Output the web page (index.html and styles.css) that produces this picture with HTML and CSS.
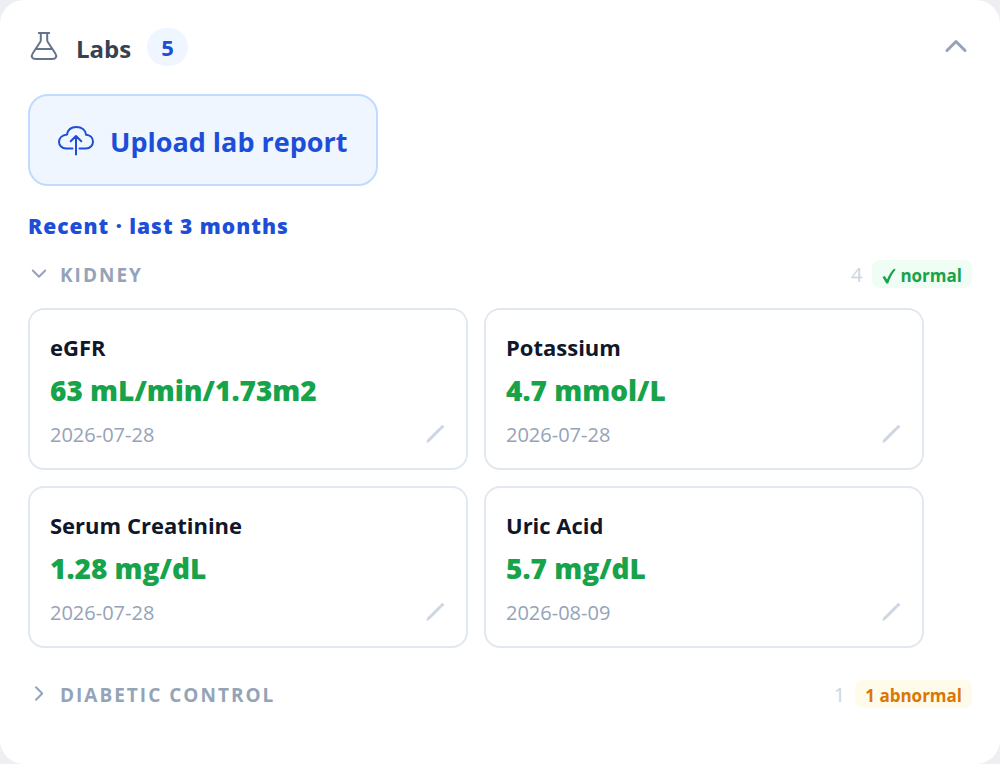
FILE: index.html
```html
<!DOCTYPE html>
<html lang="en">
<head>
<meta charset="utf-8">
<meta name="viewport" content="width=device-width, initial-scale=1">
<title>Labs</title>
<link rel="stylesheet" href="styles.css">
</head>
<body>
<main class="panel">
  <header class="panel-header">
    <svg class="icon-flask" viewBox="0 0 32 32" aria-hidden="true"><path d="M10.800 2H21.200M12.800 2V9Q12.800 10 12.200 11L4.800 22.300C2.600 25.800 4.200 28 7.800 28H24.200C27.800 28 29.400 25.800 27.200 22.300L19.800 11Q19.200 10 19.200 9V2M8 18H24"/></svg>
    <h1 class="title">Labs</h1>
    <span class="count">5</span>
    <button class="collapse" type="button" aria-label="Collapse labs" aria-expanded="true">
      <svg class="icon-up" viewBox="0 0 32 32" aria-hidden="true"><path d="M7 19.500L16 10.500L25 19.500"/></svg>
    </button>
  </header>

  <button class="upload" type="button">
    <svg class="icon-cloud" viewBox="0 0 36 36" aria-hidden="true"><path d="M14.500 26.500H8C4 26.500 1 23.500 1 20C1 16 4.200 13 9 12.500C9.800 8 13.200 5 18.300 5C23.600 5 27.500 8 28 12.700C32 13 35 15.800 35 19.500C35 23.500 32 26.500 28 26.500H21.500M18 32.500V14M12.700 19.200L18 14L23.300 19.200"/></svg>
    <span class="upload-label">Upload lab report</span>
  </button>

  <section class="recent">
    <h2 class="period">Recent · last 3 months</h2>

    <button class="group" type="button" aria-expanded="true">
      <svg class="icon-chevron" viewBox="0 0 22 22" aria-hidden="true"><path d="M4.800 7.500L11 13.700L17.200 7.500"/></svg>
      <span class="group-name">KIDNEY</span>
      <span class="group-count">4</span>
      <span class="tag tag-normal"><svg class="icon-check" viewBox="0 0 14 16" aria-hidden="true"><path d="M.5 9L2.800 8L5 11.500C7 7 9.500 3 12 .8L13.700 1.600C10.500 5.500 8 10 6.200 15.500H4.300Z"/></svg>normal</span>
    </button>

    <div class="cards">
      <article class="card">
        <h3 class="name">eGFR</h3>
        <p class="value">63 mL/min/1.73m2</p>
        <div class="card-foot">
          <time class="date" datetime="2026-07-28">2026-07-28</time>
          <button class="edit" type="button" aria-label="Edit eGFR"><svg class="icon-pencil" viewBox="0 0 22 22" aria-hidden="true"><path d="M3 19L4 16.500L15.500 5L17 6.500L5.500 18ZM16.200 4.300L17.500 3Q18.500 2.300 19.300 3T19 4.700L17.800 5.900Z"/></svg></button>
        </div>
      </article>
      <article class="card">
        <h3 class="name">Potassium</h3>
        <p class="value">4.7 mmol/L</p>
        <div class="card-foot">
          <time class="date" datetime="2026-07-28">2026-07-28</time>
          <button class="edit" type="button" aria-label="Edit Potassium"><svg class="icon-pencil" viewBox="0 0 22 22" aria-hidden="true"><path d="M3 19L4 16.500L15.500 5L17 6.500L5.500 18ZM16.200 4.300L17.500 3Q18.500 2.300 19.300 3T19 4.700L17.800 5.900Z"/></svg></button>
        </div>
      </article>
      <article class="card">
        <h3 class="name">Serum Creatinine</h3>
        <p class="value">1.28 mg/dL</p>
        <div class="card-foot">
          <time class="date" datetime="2026-07-28">2026-07-28</time>
          <button class="edit" type="button" aria-label="Edit Serum Creatinine"><svg class="icon-pencil" viewBox="0 0 22 22" aria-hidden="true"><path d="M3 19L4 16.500L15.500 5L17 6.500L5.500 18ZM16.200 4.300L17.500 3Q18.500 2.300 19.300 3T19 4.700L17.800 5.900Z"/></svg></button>
        </div>
      </article>
      <article class="card">
        <h3 class="name">Uric Acid</h3>
        <p class="value">5.7 mg/dL</p>
        <div class="card-foot">
          <time class="date" datetime="2026-08-09">2026-08-09</time>
          <button class="edit" type="button" aria-label="Edit Uric Acid"><svg class="icon-pencil" viewBox="0 0 22 22" aria-hidden="true"><path d="M3 19L4 16.500L15.500 5L17 6.500L5.500 18ZM16.200 4.300L17.500 3Q18.500 2.300 19.300 3T19 4.700L17.800 5.900Z"/></svg></button>
        </div>
      </article>
    </div>

    <button class="group" type="button" aria-expanded="false">
      <svg class="icon-chevron" viewBox="0 0 22 22" aria-hidden="true"><path d="M8 4.300L14.200 10.500L8 16.700"/></svg>
      <span class="group-name">DIABETIC CONTROL</span>
      <span class="group-count">1</span>
      <span class="tag tag-abnormal">1 abnormal</span>
    </button>
  </section>
</main>
</body>
</html>
```

FILE: styles.css
```css
* { box-sizing: border-box; }

body {
  margin: 0;
  background: #eeeff3;
  font-family: "Segoe UI", "Open Sans", "Noto Sans", sans-serif;
  color: #0f172a;
}

button {
  font: inherit;
  border: 0;
  padding: 0;
  background: none;
  color: inherit;
  cursor: pointer;
}

h1, h2, h3, p { margin: 0; }

svg {
  flex: none;
  display: block;
  fill: none;
  stroke: currentColor;
  stroke-linecap: round;
  stroke-linejoin: round;
}

.panel {
  min-height: 100vh;
  padding: 28px;
  background: #fff;
  border-radius: 24px;
}

.panel-header {
  display: flex;
  align-items: center;
  height: 38px;
}

.icon-flask {
  width: 32px;
  height: 32px;
  color: #64748b;
  stroke-width: 2;
}

.title {
  margin-left: 16px;
  padding-top: 4px;
  font-size: 24px;
  line-height: 34px;
  font-weight: 700;
  color: #374151;
}

.count {
  margin-left: 16px;
  padding: 0 14px;
  border-radius: 20px;
  background: #eff6ff;
  color: #1d4ed8;
  font-size: 22px;
  line-height: 38px;
  font-weight: 700;
}

.collapse { margin-left: auto; color: #94a3b8; }

.icon-up { width: 32px; height: 32px; stroke-width: 3; }

.upload {
  display: flex;
  align-items: center;
  gap: 16px;
  margin-top: 28px;
  padding: 24px 28px;
  border: 2px solid #bfdbfe;
  border-radius: 20px;
  background: #eff6ff;
  color: #1d4ed8;
  font-size: 27px;
  line-height: 36px;
  font-weight: 700;
}

.upload-label { padding-top: 4px; }

.icon-cloud { width: 36px; height: 36px; stroke-width: 2; }

.recent { margin-top: 24px; }

.period {
  color: #1d4ed8;
  font-size: 21px;
  line-height: 32px;
  font-weight: 800;
  letter-spacing: 1px;
}

.group {
  display: flex;
  align-items: center;
  width: 100%;
  margin-top: 16px;
  color: #94a3b8;
  font-size: 20px;
  line-height: 32px;
  text-align: left;
}

.icon-chevron { width: 22px; height: 22px; stroke-width: 2; }

.group-name {
  flex: 1;
  margin-left: 10px;
  padding-top: 2px;
  font-size: 19px;
  line-height: 30px;
  font-weight: 700;
  letter-spacing: 2px;
}

.group-count {
  padding-top: 2px;
  line-height: 30px;
  color: #cbd5e1;
}

.tag {
  display: flex;
  align-items: center;
  gap: 4px;
  margin-left: 10px;
  padding: 4px 10px 0;
  border-radius: 8px;
  font-size: 17px;
  line-height: 24px;
  font-weight: 700;
}

.tag-normal { background: #f0fdf4; color: #16a34a; }
.tag-abnormal { background: #fffbeb; color: #d97706; }

.icon-check { width: 14px; height: 16px; fill: currentColor; stroke: none; }

.cards {
  display: grid;
  grid-template-columns: 1fr 1fr;
  gap: 16px;
  margin: 18px 48px 30px 0;
}

.card {
  padding: 20px 20px 18px;
  border: 2px solid #e2e8f0;
  border-radius: 16px;
}

.name { font-size: 22px; line-height: 34px; font-weight: 700; }

.value {
  margin-top: 6px;
  color: #16a34a;
  font-size: 28px;
  line-height: 40px;
  font-weight: 800;
}

.card-foot {
  display: flex;
  align-items: center;
  justify-content: space-between;
  margin-top: 10px;
}

.date { color: #94a3b8; font-size: 20px; line-height: 30px; }

.edit { padding-bottom: 2px; color: #cbd5e1; }

.icon-pencil { width: 22px; height: 22px; fill: currentColor; stroke-width: 1; }
```
